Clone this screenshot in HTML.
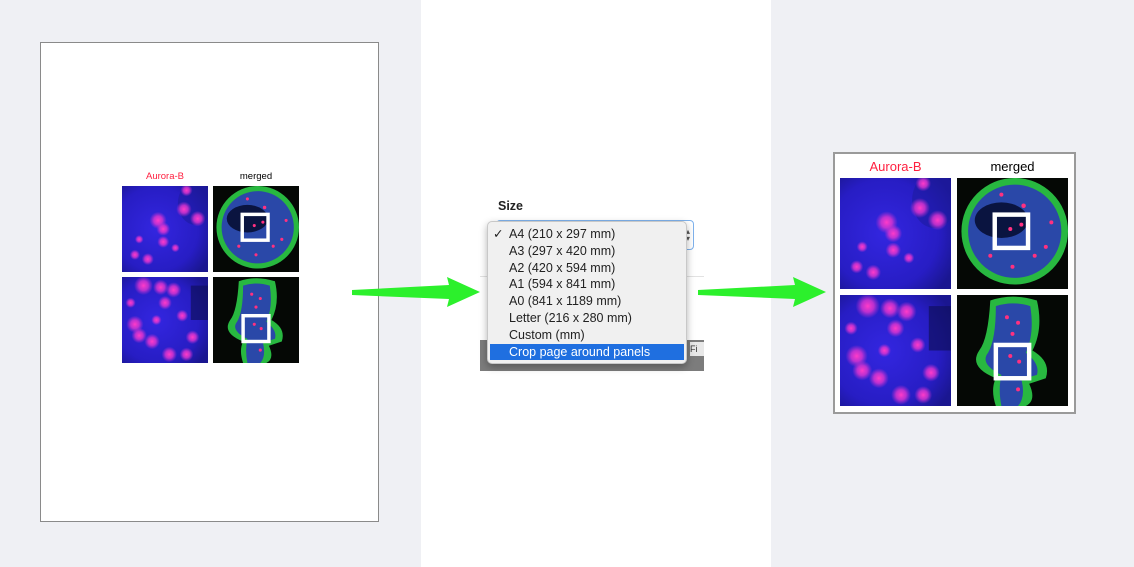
<!DOCTYPE html>
<html><head><meta charset="utf-8"><style>
*{margin:0;padding:0;box-sizing:border-box}
body{width:1134px;height:567px;position:relative;overflow:hidden;background:#eff0f4;font-family:"Liberation Sans",Helvetica,Arial,sans-serif}
.abs{position:absolute}
.mid{left:421px;top:0;width:350px;height:567px;background:#fff}
.page{left:40px;top:42px;width:339px;height:480px;background:#fff;border:1px solid #8a8a8a}
.frame{left:833px;top:152px;width:243px;height:262px;background:#fff;border:2px solid #9a9a9a}
.lbl{text-align:center}
.menu{left:487px;top:221px;width:200px;height:143px;background:#f0f0f0;border:1px solid #c8c8c8;border-radius:5px;box-shadow:0 3px 8px rgba(0,0,0,.3);font-size:12.5px;color:#222;padding-top:4px}
.menu div{height:16.8px;line-height:16.8px;padding-left:21px;position:relative}
.menu .sel{background:#1f6fe0;color:#fff;margin:0 2px;padding-left:19px}
</style></head><body>
<svg width="0" height="0" style="position:absolute">
<defs>
<radialGradient id="bg1" cx="0.4" cy="0.5" r="0.7"><stop offset="0" stop-color="#3326e0"/><stop offset="0.7" stop-color="#271dc4"/><stop offset="1" stop-color="#1a1690"/></radialGradient>
<radialGradient id="pk"><stop offset="0" stop-color="#ff3cc8"/><stop offset="0.5" stop-color="#e034d0" stop-opacity=".8"/><stop offset="1" stop-color="#c030d0" stop-opacity="0"/></radialGradient>
<symbol id="a1" viewBox="0 0 100 100">
<rect width="100" height="100" fill="url(#bg1)"/>
<ellipse cx="85" cy="20" rx="20" ry="25" fill="#1e1aa0" opacity=".6"/>
<g fill="url(#pk)"><circle cx="42" cy="40" r="10"/><circle cx="48" cy="50" r="8"/><circle cx="72" cy="27" r="9"/><circle cx="88" cy="38" r="9"/><circle cx="75" cy="5" r="7"/><circle cx="30" cy="85" r="7"/><circle cx="15" cy="80" r="6"/><circle cx="62" cy="72" r="5"/><circle cx="48" cy="65" r="7"/><circle cx="20" cy="62" r="5"/></g>
</symbol>
<symbol id="a2" viewBox="0 0 100 100">
<rect width="100" height="100" fill="url(#bg1)"/>
<rect x="80" y="10" width="20" height="40" fill="#101060" opacity=".7"/>
<g fill="url(#pk)"><circle cx="25" cy="10" r="11"/><circle cx="45" cy="12" r="9"/><circle cx="60" cy="15" r="9"/><circle cx="50" cy="30" r="8"/><circle cx="15" cy="55" r="10"/><circle cx="20" cy="68" r="9"/><circle cx="35" cy="75" r="9"/><circle cx="70" cy="45" r="7"/><circle cx="40" cy="50" r="6"/><circle cx="82" cy="70" r="8"/><circle cx="55" cy="90" r="9"/><circle cx="75" cy="90" r="8"/><circle cx="10" cy="30" r="6"/></g>
</symbol>
<symbol id="m1" viewBox="0 0 100 100">
<rect width="100" height="100" fill="#050805"/>
<circle cx="52" cy="48" r="48" fill="#28b840"/>
<circle cx="52" cy="48" r="42" fill="#2a48a8"/>
<ellipse cx="40" cy="38" rx="24" ry="16" fill="#0a1440"/>
<g fill="#ff3080"><circle cx="40" cy="15" r="1.8"/><circle cx="60" cy="25" r="2"/><circle cx="85" cy="40" r="1.8"/><circle cx="30" cy="70" r="1.8"/><circle cx="50" cy="80" r="1.8"/><circle cx="70" cy="70" r="1.8"/><circle cx="48" cy="46" r="1.8"/><circle cx="58" cy="42" r="1.8"/><circle cx="80" cy="62" r="1.8"/></g>
<rect x="34" y="33" width="30" height="30" fill="none" stroke="#fff" stroke-width="4"/>
</symbol>
<symbol id="m2" viewBox="0 0 100 100">
<rect width="100" height="100" fill="#050805"/>
<path d="M30 5 Q50 -2 72 5 Q78 30 68 50 Q85 60 80 75 L65 80 Q72 95 62 100 L35 100 Q30 85 35 75 Q10 65 20 50 Q28 40 30 5Z" fill="#28b840"/>
<path d="M35 10 Q50 5 66 10 Q70 35 62 52 Q75 62 72 72 L58 76 Q62 92 55 100 L40 100 Q37 85 40 72 Q20 62 28 52 Q35 40 35 10Z" fill="#2a48a8"/>
<g fill="#ff3080"><circle cx="45" cy="20" r="1.8"/><circle cx="55" cy="25" r="1.8"/><circle cx="50" cy="35" r="1.8"/><circle cx="48" cy="55" r="1.8"/><circle cx="56" cy="60" r="1.8"/><circle cx="55" cy="85" r="1.8"/></g>
<rect x="35" y="45" width="30" height="30" fill="none" stroke="#fff" stroke-width="4"/>
</symbol>
</defs></svg>

<div class="abs mid"></div>
<div class="abs page"></div>
<div class="abs lbl" style="left:122px;top:171px;width:86px;font-size:9.5px;color:#ff1f3f">Aurora-B</div>
<div class="abs lbl" style="left:213px;top:171px;width:86px;font-size:9.5px;color:#000">merged</div>
<svg class="abs" style="left:122px;top:186px" width="86" height="86"><use href="#a1"/></svg>
<svg class="abs" style="left:213px;top:186px" width="86" height="86"><use href="#m1"/></svg>
<svg class="abs" style="left:122px;top:277px" width="86" height="86"><use href="#a2"/></svg>
<svg class="abs" style="left:213px;top:277px" width="86" height="86"><use href="#m2"/></svg>

<div class="abs" style="left:498px;top:199px;font-size:12.5px;font-weight:bold;color:#222">Size</div>
<div class="abs" style="left:480px;top:340px;width:224px;height:31px;background:#7c7c7c"></div>
<div class="abs" style="left:690px;top:342px;width:14px;height:14px;background:#e8e8e8;font-size:9px;line-height:14px;color:#333">Fi</div>
<div class="abs" style="left:480px;top:276px;width:224px;height:1px;background:#e2e2e2"></div>
<div class="abs" style="left:496px;top:220px;width:198px;height:30px;border:1px solid #7fb2ec;border-radius:4px;background:#fff"></div>
<div class="abs" style="left:686px;top:228px;font-size:8px;color:#555;line-height:7px">▴<br>▾</div>
<div class="abs menu">
<div><span style="position:absolute;left:5px">✓</span>A4 (210 x 297 mm)</div>
<div>A3 (297 x 420 mm)</div>
<div>A2 (420 x 594 mm)</div>
<div>A1 (594 x 841 mm)</div>
<div>A0 (841 x 1189 mm)</div>
<div>Letter (216 x 280 mm)</div>
<div>Custom (mm)</div>
<div class="sel">Crop page around panels</div>
</div>

<svg class="abs" style="left:0;top:0" width="1134" height="567">
<polygon points="352,290 449,285 447,277 480,292 447,307 449,299 352,295" fill="#2cf02c"/>
<polygon points="698,290 795,285 793,277 826,292 793,307 795,299 698,295" fill="#2cf02c"/>
</svg>

<div class="abs frame"></div>
<div class="abs lbl" style="left:840px;top:159px;width:111px;font-size:13px;color:#ff1f3f">Aurora-B</div>
<div class="abs lbl" style="left:957px;top:159px;width:111px;font-size:13px;color:#000">merged</div>
<svg class="abs" style="left:840px;top:178px" width="111" height="111"><use href="#a1"/></svg>
<svg class="abs" style="left:957px;top:178px" width="111" height="111"><use href="#m1"/></svg>
<svg class="abs" style="left:840px;top:295px" width="111" height="111"><use href="#a2"/></svg>
<svg class="abs" style="left:957px;top:295px" width="111" height="111"><use href="#m2"/></svg>
</body></html>
